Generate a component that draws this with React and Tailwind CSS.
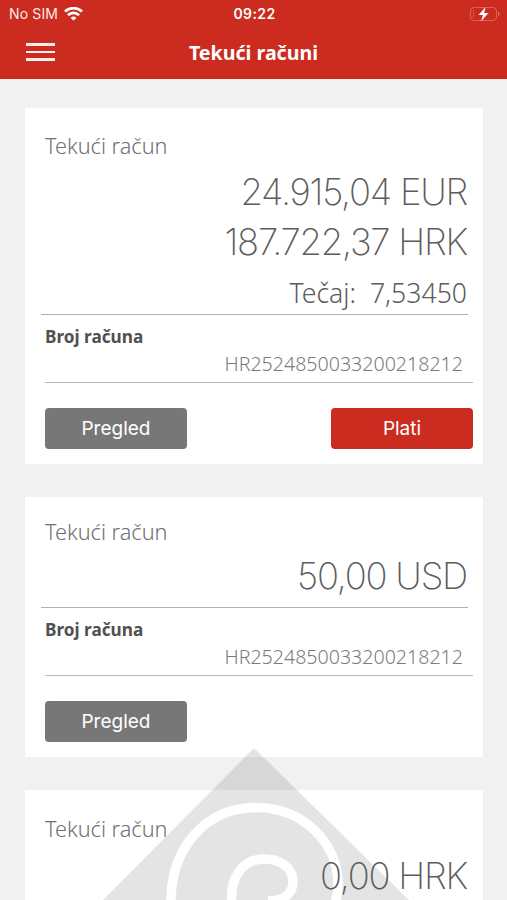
import clsx from 'clsx';

const accounts = [
  {
    id: 1,
    amounts: ['24.915,04 EUR', '187.722,37 HRK'],
    rate: '7,53450',
    iban: 'HR2524850033200218212',
    canPay: true,
    className: 'pt-[24px] h-[356px]',
    amountsClass: 'mt-[7px]',
  },
  {
    id: 2,
    amounts: ['50,00 USD'],
    iban: 'HR2524850033200218212',
    className: 'pt-[21px] h-[260px]',
    amountsClass: 'mt-[5px] mb-[6px]',
  },
  {
    id: 3,
    amounts: ['0,00 HRK'],
    className: 'pt-[25px] h-[266px]',
    amountsClass: 'mt-[8px] mb-[6px]',
  },
];

function StatusBar() {
  return (
    <div className="grid grid-cols-3 items-center h-[27px] pl-[9px] pr-[7px] font-['Inter'] text-[14px] text-white">
      <div className="flex items-center gap-[6px]">
        <span className="text-[14px] tracking-[0.15px] opacity-90">No SIM</span>
        <svg width="19" height="14" viewBox="0 0 19 14" fill="none" stroke="white" strokeWidth="2.8">
          <path d="M1 4.6a12.2 12.2 0 0 1 17 0" />
          <path d="M4 8.2a7.9 7.9 0 0 1 11 0" />
          <path d="M9.5 13.6L6.6 10.9a4.1 4.1 0 0 1 5.8 0z" fill="white" stroke="none" />
        </svg>
      </div>
      <span className="text-center font-semibold tracking-[0.4px]">09:22</span>
      <svg className="justify-self-end" width="31" height="16" viewBox="0 0 31 16" fill="none">
        <rect x="1.5" y="1.5" width="26" height="13" rx="3.5" stroke="white" strokeOpacity="0.25" />
        <path d="M29 5.5c2 .8 2 4.200 0 5z" fill="white" fillOpacity="0.32" />
        <path d="M4.500 3.500v9" stroke="white" strokeOpacity="0.2" />
        <path d="M16.700 1L9.500 9h4.300l-1.600 6.200L19.500 7h-4.400z" fill="white" />
      </svg>
    </div>
  );
}

function Header() {
  return (
    <header className="h-[79px] bg-[#cc2c20]">
      <StatusBar />
      <div className="grid grid-cols-[1fr_auto_1fr] items-center h-[50px] px-[26px]">
        <button className="flex flex-col gap-[5px] w-[29px]" aria-label="Izbornik">
          <span className="h-[2.5px] w-full bg-[#ffeeea]" />
          <span className="h-[2.5px] w-full bg-[#ffeeea]" />
          <span className="h-[2.5px] w-full bg-[#ffeeea]" />
        </button>
        <h1 className="pt-px text-[19.6px] font-bold text-white">Tekući računi</h1>
      </div>
    </header>
  );
}

// Brand mark showing through behind the card texts
function Watermark() {
  return (
    <svg
      className="absolute left-[98px] top-[748px] pointer-events-none"
      width="312"
      height="152"
      viewBox="98 748 312 152"
      fill="none"
    >
      <path d="M254 748L410 901H102z" fill="black" fillOpacity="0.105" />
      <path
        d="M171 904C170 848 206 807.5 256 807.5C303 807.5 338 843 338 884C338 892 337 898 335 904"
        stroke="white"
        strokeWidth="9.5"
      />
      <path
        d="M232 904C229 878 243 859 264 859C281 859 293 868 293 882C293 894 283 901 268 901"
        stroke="white"
        strokeWidth="9.5"
      />
    </svg>
  );
}

function AccountDetails({ account }) {
  return (
    <div className="pl-[4px]">
      <h3 className="mt-[10px] h-[24px] leading-[24px] text-[17.2px] font-bold text-[#505050]">Broj računa</h3>
      <p className="mt-[1px] pr-[10px] h-[28px] leading-[28px] text-right text-[19.6px] font-light text-[#7b7b7b]">
        {account.iban}
      </p>
      <div className="mt-[4px] h-px bg-[#b8b8b8]" />
      <div className="mt-[25px] flex justify-between font-['Inter'] text-[19px] text-white">
        <button className="w-[142px] h-[41px] pt-[2px] rounded-[4px] bg-[#777]">Pregled</button>
        {account.canPay && (
          <button className="w-[142px] h-[41px] pt-[2px] rounded-[4px] bg-[#cc2c20]">Plati</button>
        )}
      </div>
    </div>
  );
}

function AccountCard({ account }) {
  return (
    <section className={clsx('bg-white', account.className)}>
      <div className="relative z-10 pl-[16px] pr-[10px]">
        <h2 className="pl-[4px] h-[28px] leading-[28px] text-[21.7px] font-light text-[#707070]">Tekući račun</h2>
        <div className={clsx('pr-[6px] text-right text-[#5c5c5c]', account.amountsClass)}>
          {account.amounts.map((amount) => (
            <p
              key={amount}
              className="h-[50px] leading-[50px] font-['Inter'] text-[36.5px] font-extralight tracking-[-1.25px]"
            >
              {amount}
            </p>
          ))}
          {account.rate && (
            <p className="h-[47px] leading-[52px] text-[26.6px] font-light whitespace-pre">
              Tečaj:{'  '}{account.rate}
            </p>
          )}
        </div>
        <div className="mr-[5px] h-px bg-[#b0b0b0]" />
        {account.iban && <AccountDetails account={account} />}
      </div>
    </section>
  );
}

function App() {
  return (
    <div className="relative h-[900px] w-[507px] overflow-hidden bg-[#f1f1f1] font-['Noto_Sans',sans-serif]">
      <Header />
      <main className="flex flex-col gap-[33px] pt-[29px] pl-[25px] pr-[24px]">
        {accounts.map((account) => (
          <AccountCard key={account.id} account={account} />
        ))}
      </main>
      <Watermark />
    </div>
  );
}

export default App;
